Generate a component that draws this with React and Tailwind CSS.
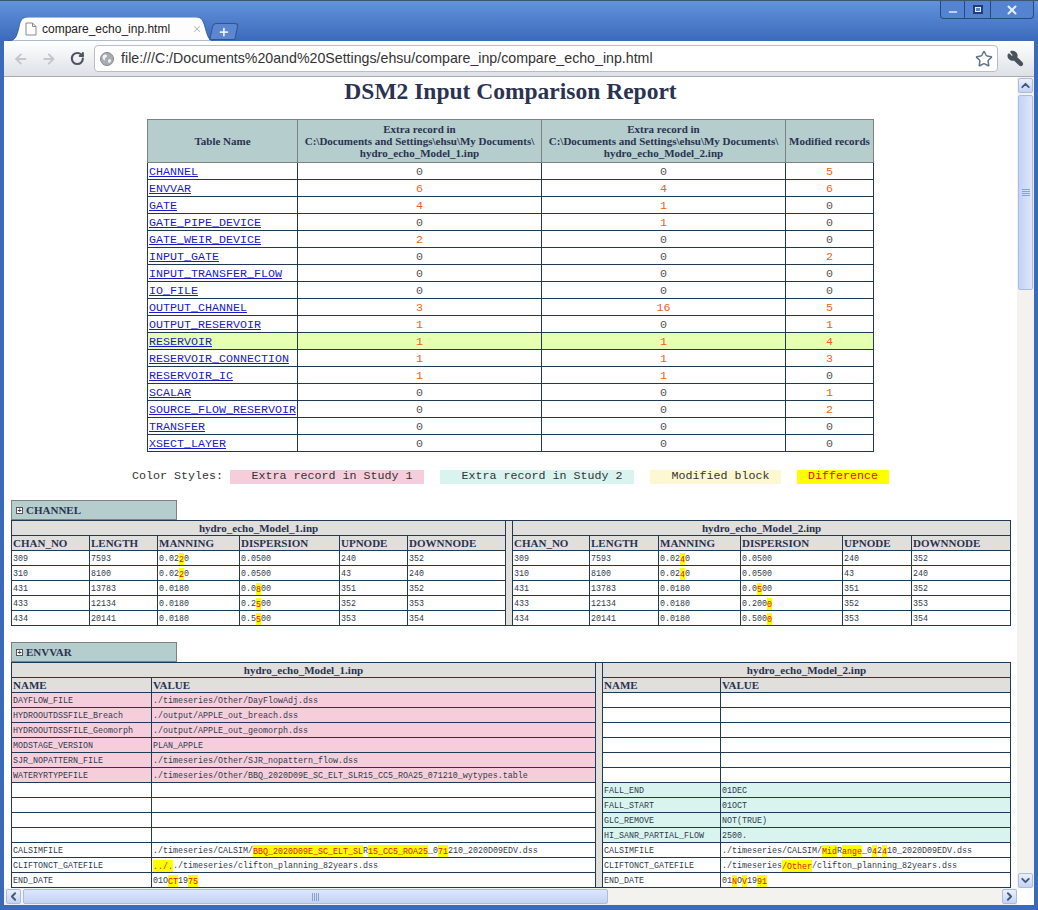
import { RotateCw, ArrowLeft, ArrowRight, Star, Wrench, X, Plus, Minus, ChevronUp, ChevronDown, ChevronLeft, ChevronRight } from "lucide-react";

const SERIF = "font-['Liberation_Serif',serif]";

const summary = [
  ["CHANNEL", 0, 0, 5],
  ["ENVVAR", 6, 4, 6],
  ["GATE", 4, 1, 0],
  ["GATE_PIPE_DEVICE", 0, 1, 0],
  ["GATE_WEIR_DEVICE", 2, 0, 0],
  ["INPUT_GATE", 0, 0, 2],
  ["INPUT_TRANSFER_FLOW", 0, 0, 0],
  ["IO_FILE", 0, 0, 0],
  ["OUTPUT_CHANNEL", 3, 16, 5],
  ["OUTPUT_RESERVOIR", 1, 0, 1],
  ["RESERVOIR", 1, 1, 4],
  ["RESERVOIR_CONNECTION", 1, 1, 3],
  ["RESERVOIR_IC", 1, 1, 0],
  ["SCALAR", 0, 0, 1],
  ["SOURCE_FLOW_RESERVOIR", 0, 0, 2],
  ["TRANSFER", 0, 0, 0],
  ["XSECT_LAYER", 0, 0, 0],
];

const channelHead = ["CHAN_NO", "LENGTH", "MANNING", "DISPERSION", "UPNODE", "DOWNNODE"];
const channelLeft = [
  ["309", "7593", "0.02[2]0", "0.0500", "240", "352"],
  ["310", "8100", "0.02[2]0", "0.0500", "43", "240"],
  ["431", "13783", "0.0180", "0.0[8]00", "351", "352"],
  ["433", "12134", "0.0180", "0.2[5]00", "352", "353"],
  ["434", "20141", "0.0180", "0.5[5]00", "353", "354"],
];
const channelRight = [
  ["309", "7593", "0.02[4]0", "0.0500", "240", "352"],
  ["310", "8100", "0.02[4]0", "0.0500", "43", "240"],
  ["431", "13783", "0.0180", "0.0[5]00", "351", "352"],
  ["433", "12134", "0.0180", "0.200[0]", "352", "353"],
  ["434", "20141", "0.0180", "0.500[0]", "353", "354"],
];

const envLeft = [
  ["DAYFLOW_FILE", "./timeseries/Other/DayFlowAdj.dss", "pink"],
  ["HYDROOUTDSSFILE_Breach", "./output/APPLE_out_breach.dss", "pink"],
  ["HYDROOUTDSSFILE_Geomorph", "./output/APPLE_out_geomorph.dss", "pink"],
  ["MODSTAGE_VERSION", "PLAN_APPLE", "pink"],
  ["SJR_NOPATTERN_FILE", "./timeseries/Other/SJR_nopattern_flow.dss", "pink"],
  ["WATERYRTYPEFILE", "./timeseries/Other/BBQ_2020D09E_SC_ELT_SLR15_CC5_ROA25_071210_wytypes.table", "pink"],
  ["", ""],
  ["", ""],
  ["", ""],
  ["", ""],
  ["CALSIMFILE", "./timeseries/CALSIM/[BBQ_2020D09E_SC_ELT_SL]R[15_CC5_ROA25]_0[71]210_2020D09EDV.dss"],
  ["CLIFTONCT_GATEFILE", "[../.]./timeseries/clifton_planning_82years.dss"],
  ["END_DATE", "01O[CT]19[75]"],
];
const envRight = [
  ["", ""],
  ["", ""],
  ["", ""],
  ["", ""],
  ["", ""],
  ["", ""],
  ["FALL_END", "01DEC", "mint"],
  ["FALL_START", "01OCT", "mint"],
  ["GLC_REMOVE", "NOT(TRUE)", "mint"],
  ["HI_SANR_PARTIAL_FLOW", "2500.", "mint"],
  ["CALSIMFILE", "./timeseries/CALSIM/[Mid]R[ange]_0[4]2[4]10_2020D09EDV.dss"],
  ["CLIFTONCT_GATEFILE", "./timeseries[/Other]/clifton_planning_82years.dss"],
  ["END_DATE", "01[N]O[V]19[91]"],
];

// "[x]" in a value marks the part that differs between the two files
function Diff({ text }) {
  return text.split(/(\[[^\]]*\])/).map((part, i) =>
    part.startsWith("[") ? (
      <span key={i} className="bg-[#ffff00] text-[#e01000] py-[1.5px]">{part.slice(1, -1)}</span>
    ) : (
      <span key={i}>{part}</span>
    )
  );
}

function SectionTab({ name }) {
  return (
    <div className={`w-[166px] h-[20px] bg-[#b5cdcd] border border-[#808080] flex items-center pl-[4px] gap-[3px] text-[11px] font-bold text-[#2a3350] ${SERIF}`}>
      <span className="w-[7px] h-[7px] border border-[#555] bg-white flex items-center justify-center text-[7px] leading-none font-['Liberation_Sans',sans-serif]">+</span>
      {name}
    </div>
  );
}

function DataTable({ cols, head, rows, title, width }) {
  const cell = "border border-[#1f3a55] px-[1px] h-[15px] p-0 overflow-hidden whitespace-nowrap";
  return (
    <table className="table-fixed border-collapse" style={{ width }}>
      <colgroup>
        {cols.map((w, i) => <col key={i} style={{ width: w }} />)}
      </colgroup>
      <tbody>
        <tr className={`bg-[#e0dfdc] text-[#2a3350] text-[11px] leading-[13px] font-bold ${SERIF}`}>
          <td colSpan={cols.length} className={`${cell} text-center`}>{title}</td>
        </tr>
        <tr className={`bg-[#e0dfdc] text-[#2a3350] text-[11px] leading-[13px] font-bold ${SERIF}`}>
          {head.map((h) => <td key={h} className={cell}>{h}</td>)}
        </tr>
        {rows.map((row, i) => {
          const tone = row[head.length];
          return (
            <tr key={i} className={tone === "pink" ? "bg-[#f6cedb]" : tone === "mint" ? "bg-[#d9f3ef]" : "bg-white"}>
              {row.slice(0, head.length).map((v, j) => (
                <td key={j} className={`${cell} pt-[2px] leading-[12px] text-[8.33px] text-[#2f3a4a] font-['Liberation_Mono',monospace]`}>
                  <Diff text={v} />
                </td>
              ))}
            </tr>
          );
        })}
      </tbody>
    </table>
  );
}

function Compare({ leftW, sep, rightW, leftCols, rightCols, head, left, right }) {
  return (
    <div className="flex">
      <DataTable cols={leftCols} head={head} rows={left} title="hydro_echo_Model_1.inp" width={leftW} />
      <div className="bg-[#e0dfdc] border-y border-[#1f3a55]" style={{ width: sep }} />
      <DataTable cols={rightCols} head={head} rows={right} title="hydro_echo_Model_2.inp" width={rightW} />
    </div>
  );
}

function Count({ n }) {
  return <td className={`border border-[#1f3a55] p-0 pt-[2px] leading-[13px] text-center ${n > 0 ? "text-[#e8641a]" : "text-[#555]"}`}>{n}</td>;
}

function Summary() {
  const th = `border border-[#808080] bg-[#b5cdcd] p-0 text-center text-[11px] leading-[12px] font-bold text-[#2a3350] ${SERIF}`;
  return (
    <table className="table-fixed border-collapse w-[726px] ml-[143px] mt-[14px] font-['Liberation_Mono',monospace] text-[11.67px]">
      <colgroup>
        <col className="w-[150px]" />
        <col className="w-[244px]" />
        <col className="w-[244px]" />
        <col className="w-[88px]" />
      </colgroup>
      <tbody>
        <tr className="h-[43px]">
          <td className={th}>Table Name</td>
          <td className={th}>Extra record in<br />C:\Documents and Settings\ehsu\My Documents\<br />hydro_echo_Model_1.inp</td>
          <td className={th}>Extra record in<br />C:\Documents and Settings\ehsu\My Documents\<br />hydro_echo_Model_2.inp</td>
          <td className={th}>Modified records</td>
        </tr>
        {summary.map(([name, a, b, c]) => (
          <tr key={name} className={`h-[17px] ${name === "RESERVOIR" ? "bg-[#e6ffb0]" : "bg-white"}`}>
            <td className="border border-[#1f3a55] p-0 pt-[2px] pl-[1px] leading-[13px] whitespace-nowrap">
              <a href="#" className="text-[#1a1ac8] underline">{name}</a>
            </td>
            <Count n={a} />
            <Count n={b} />
            <Count n={c} />
          </tr>
        ))}
      </tbody>
    </table>
  );
}

function Legend() {
  const box = "h-[14px] flex items-center justify-center";
  return (
    <div className="flex items-center h-[14px] mt-[18px] ml-[128px] text-[11.67px] text-[#333] font-['Liberation_Mono',monospace]">
      <span className="w-[98px]">Color Styles:</span>
      <span className={`${box} w-[194px] pl-[10px] bg-[#f6cedb]`}>Extra record in Study 1</span>
      <span className={`${box} w-[194px] ml-[16px] pl-[10px] bg-[#d9f3ef]`}>Extra record in Study 2</span>
      <span className={`${box} w-[131px] ml-[16px] pl-[10px] bg-[#fdf8d2]`}>Modified block</span>
      <span className={`${box} w-[92px] ml-[16px] bg-[#ffff00] text-[#e01000]`}>Difference</span>
    </div>
  );
}

function WinButton({ children, className }) {
  return <div className={`h-[17px] flex items-center justify-center border-r border-[#27497f] last:border-r-0 ${className}`}>{children}</div>;
}

function TitleStrip() {
  return (
    <div className="h-[41px] flex justify-between bg-gradient-to-b from-[#6293dc] to-[#3c6abb] border-t border-[#40566f]">
      <div className="flex items-end pl-[8px]">
        <div className="relative w-[205px] h-[24px] flex items-center pl-[17px]">
          <svg width="205" height="24" viewBox="0 0 205 24" className="absolute left-0 top-0">
            <path d="M0 24C8 24 9 18 11 10C12 4 14 0 20 0H188C194 0 195 4 197 10C199 18 201 24 205 24Z" fill="#fdfdfe" stroke="#2f5592" strokeWidth="0.8" />
          </svg>
          <svg width="12" height="14" viewBox="0 0 12 14" className="relative">
            <path d="M1 1H7.500L11 4.500V13H1Z M7.500 1V4.500H11" fill="#fff" stroke="#8a8a8a" strokeWidth="1" />
          </svg>
          <span className="relative ml-[5px] w-[150px] text-[12px] text-[#222] font-['Liberation_Sans',sans-serif]">compare_echo_inp.html</span>
          <X size={10} strokeWidth={2.500} className="relative text-[#b5b5b5]" />
        </div>
        <div className="ml-[-2px] mb-[1px] w-[26px] h-[17px] rounded-t-[4px] -skew-x-12 bg-[#5c87cf] border border-[#2f5592] flex items-center justify-center">
          <Plus size={12} strokeWidth={3.500} className="text-[#e6eefa] skew-x-12" />
        </div>
      </div>
      <div className="flex mr-[4px] h-[18px] border border-t-0 border-[#27497f] rounded-b-[4px] bg-[#5484d1]">
        <WinButton className="w-[24px]"><Minus size={12} strokeWidth={3} className="text-[#e4ecf8] mt-[5px]" /></WinButton>
        <WinButton className="w-[26px]">
          <span className="w-[10px] h-[9px] border-2 border-[#1f3d70] flex items-center justify-center bg-[#e4ecf8]">
            <span className="w-[4px] h-[3px] bg-[#5484d1]" />
          </span>
        </WinButton>
        <WinButton className="w-[42px]"><X size={14} strokeWidth={3.500} className="text-[#e4ecf8]" /></WinButton>
      </div>
    </div>
  );
}

function Toolbar() {
  return (
    <div className="mx-[4px] h-[36px] flex items-center bg-gradient-to-b from-[#ffffff] to-[#dde1e6] border-b border-[#a8acb2] pl-[9px] pr-[10px]">
      <ArrowLeft size={16} strokeWidth={3} className="text-[#c3c7cd]" />
      <ArrowRight size={16} strokeWidth={3} className="ml-[12px] text-[#c3c7cd]" />
      <RotateCw size={15} strokeWidth={3.500} className="ml-[14px] text-[#4f5560]" />
      <div className="ml-[9px] h-[27px] w-[923px] mr-[9px] flex items-center bg-white border border-[#b9bdc3] rounded-[4px] pl-[5px] pr-[4px]">
        <svg width="14" height="14" viewBox="0 0 14 14">
          <circle cx="7" cy="7" r="6.500" fill="#a9adb2" stroke="#85898e" />
          <path d="M3 3.500C5 2 7 2.500 7 4C7 5.500 4.500 5.500 5 7.500C5.500 9 4 8.500 3 7C2.500 6 2.500 4.500 3 3.500Z M8.500 7.500C10 7 11.500 7.500 11 9C10.500 10.500 9 11.500 8.500 10.500C8 9.500 8 8 8.500 7.500Z" fill="#f2f3f4" />
        </svg>
        <span className="ml-[7px] flex-1 text-[14.2px] text-[#333] whitespace-nowrap font-['Liberation_Sans',sans-serif]">file:///C:/Documents%20and%20Settings/ehsu/compare_inp/compare_echo_inp.html</span>
        <Star size={18} strokeWidth={2} className="text-[#5f7488]" />
      </div>
      <Wrench size={17} strokeWidth={2.500} className="text-[#4a525c] fill-[#4a525c] -scale-x-100" />
    </div>
  );
}

function ScrollBtn({ children, className }) {
  return (
    <div className={`w-[15px] h-[15px] bg-gradient-to-b from-[#eaf1fd] to-[#c3d3f4] border border-[#a9bce4] rounded-[2px] flex items-center justify-center shrink-0 ${className || ""}`}>
      {children}
    </div>
  );
}

function Grip({ vertical }) {
  return (
    <div className={`flex gap-[1px] ${vertical ? "flex-col" : ""}`}>
      {[0, 1, 2, 3].map((i) => (
        <span key={i} className={`bg-[#8da2c9] ${vertical ? "w-[8px] h-[1px]" : "w-[1px] h-[8px]"}`} />
      ))}
    </div>
  );
}

export default function App() {
  return (
    <div className="w-[1038px] h-[910px] overflow-hidden flex flex-col bg-[#3c6abb]">
      <TitleStrip />
      <Toolbar />
      <div className="flex-1 min-h-0 mx-[4px] mb-[5px] flex flex-col bg-white">
        <div className="flex-1 min-h-0 flex">
          <div className="w-[1013px] overflow-hidden">
            <div className={`text-center text-[23.5px] leading-[28px] font-bold text-[#2a3350] ${SERIF}`}>DSM2 Input Comparison Report</div>
            <Summary />
            <Legend />
            <div className="ml-[7px] mt-[16px]">
              <SectionTab name="CHANNEL" />
              <Compare
                leftW={494}
                sep={6}
                rightW={498}
                leftCols={[78, 68, 82, 100, 68, 98]}
                rightCols={[77, 69, 82, 102, 69, 99]}
                head={channelHead}
                left={channelLeft}
                right={channelRight}
              />
            </div>
            <div className="ml-[7px] mt-[16px]">
              <SectionTab name="ENVVAR" />
              <Compare
                leftW={584}
                sep={6}
                rightW={408}
                leftCols={[140, 444]}
                rightCols={[118, 290]}
                head={["NAME", "VALUE"]}
                left={envLeft}
                right={envRight}
              />
            </div>
          </div>
          <div className="w-[17px] bg-[#f3f2ee] flex flex-col items-center pt-[1px]">
            <ScrollBtn><ChevronUp size={13} strokeWidth={3.500} className="text-[#44587a]" /></ScrollBtn>
            <div className="w-[15px] h-[195px] mt-[2px] bg-gradient-to-r from-[#c3d3f4] to-[#dde7fb] border border-[#a9bce4] rounded-[2px] flex items-center justify-center shrink-0">
              <Grip vertical />
            </div>
            <div className="flex-1" />
            <ScrollBtn><ChevronDown size={13} strokeWidth={3.500} className="text-[#44587a]" /></ScrollBtn>
          </div>
        </div>
        <div className="h-[17px] flex">
          <div className="w-[1013px] bg-[#f3f2ee] flex items-center pl-[2px]">
            <ScrollBtn><ChevronLeft size={13} strokeWidth={3.500} className="text-[#44587a]" /></ScrollBtn>
            <div className="w-[585px] h-[15px] ml-[2px] bg-gradient-to-b from-[#dde7fb] to-[#c3d3f4] border border-[#a9bce4] rounded-[2px] flex items-center justify-center">
              <Grip />
            </div>
            <div className="flex-1" />
            <ScrollBtn><ChevronRight size={13} strokeWidth={3.500} className="text-[#44587a]" /></ScrollBtn>
          </div>
        </div>
      </div>
    </div>
  );
}
